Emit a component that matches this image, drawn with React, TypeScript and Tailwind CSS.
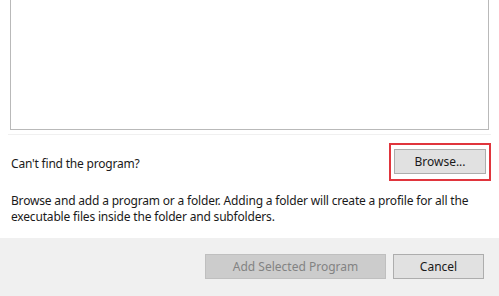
export default function App() {
  return (
    <div className="flex h-[296px] w-[499px] flex-col bg-white font-['Noto_Sans','Liberation_Sans',sans-serif] text-[12px] text-[#1a1a1a]">
      {/* program list, top cut off */}
      <div className="mx-[10px] h-[130px] shrink-0 border-x border-b border-[#b9b9b9] bg-white" />
      <div className="mx-[8px] mt-[4px] h-px bg-[#f0f0f0]" />

      <div className="mt-[8px] flex items-center justify-between pl-[11px] pr-[8px]">
        <span className="pt-[3px] tracking-[-0.2px]">Can&apos;t find the program?</span>
        <div className="border-2 border-[#e0353d] px-[3px] pb-[5px] pt-[4px]">
          <button className="h-[25px] w-[92px] border border-[#adadad] bg-[#e1e1e1] text-[12px] text-[#1a1a1a]">
            Browse...
          </button>
        </div>
      </div>

      <p className="mt-[12px] pl-[11px] pr-[10px] leading-[16px] tracking-[-0.18px]">
        Browse and add a program or a folder. Adding a folder will create a profile for all the
        <br />
        executable files inside the folder and subfolders.
      </p>

      <div className="mt-auto flex h-[58px] items-center justify-end gap-[7px] bg-[#f0f0f0] pb-[1px] pr-[15px]">
        <button
          disabled
          className="h-[25px] w-[181px] border border-[#bfbfbf] bg-[#cccccc] text-[12px] text-[#838383]"
        >
          Add Selected Program
        </button>
        <button className="h-[25px] w-[91px] border border-[#adadad] bg-[#e1e1e1] text-[12px] text-[#1a1a1a]">
          Cancel
        </button>
      </div>
    </div>
  );
}
